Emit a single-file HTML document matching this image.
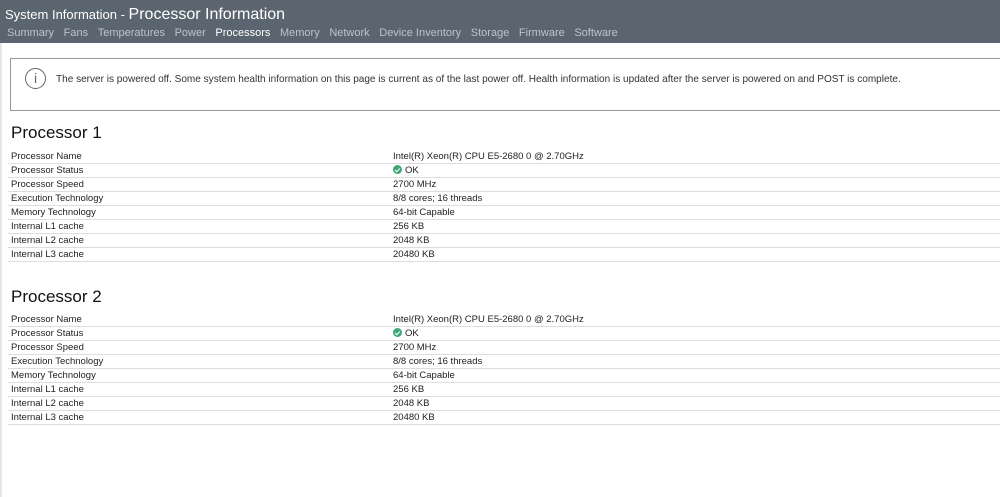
<!DOCTYPE html>
<html><head><style>
body{margin:0;width:1000px;height:497px;background:#fff;font-family:"Liberation Sans",sans-serif;overflow:hidden;position:relative}
.hdr{position:absolute;left:0;top:0;width:1000px;height:43px;background:#5b6570}
.t{position:absolute;left:5px;top:6px;color:#fff;font-size:13px;white-space:nowrap}
.t b{font-weight:normal;font-size:16px}
.tabs{position:absolute;left:7px;top:27px;font-size:11px;color:#bcc3ca;white-space:nowrap}
.tabs span{margin-right:9.6px}
.tabs .a{color:#fff}
.lb{position:absolute;left:0;top:43px;width:2px;height:454px;background:#e6e6e6}
.note{position:absolute;left:10px;top:58px;width:992px;height:53px;border:1px solid #999;box-sizing:border-box}
.ic{position:absolute;left:14px;top:9px;width:21px;height:21px;border:1.5px solid #666;border-radius:50%;box-sizing:border-box;color:#666;font-size:14px;text-align:center;line-height:19px}
.nt{position:absolute;left:45px;top:14px;font-size:10.5px;color:#333;white-space:nowrap;transform:scaleX(0.956);transform-origin:left}
h2{position:absolute;left:11px;margin:0;font-weight:normal;font-size:17px;color:#111}
table{position:absolute;left:8px;width:992px;border-collapse:collapse;font-size:9.5px;color:#222}
td{height:13px;border-bottom:1px solid #ddd;padding:0 0 0 3px;vertical-align:middle}
td:first-child{width:379px}
.ok{display:inline-block;width:9px;height:9px;border-radius:50%;background:#3fa776;vertical-align:-1px;margin-right:3px;position:relative}
.ok:after{content:"";position:absolute;left:3px;top:1.5px;width:2px;height:4px;border:solid #fff;border-width:0 1.3px 1.3px 0;transform:rotate(45deg)}
</style></head><body>
<div class="hdr"><div class="t">System Information - <b>Processor Information</b></div>
<div class="tabs"><span>Summary</span><span>Fans</span><span>Temperatures</span><span>Power</span><span class="a">Processors</span><span>Memory</span><span>Network</span><span>Device Inventory</span><span>Storage</span><span>Firmware</span><span>Software</span></div></div>
<div class="lb"></div>
<div class="note"><div class="ic">i</div><div class="nt">The server is powered off. Some system health information on this page is current as of the last power off. Health information is updated after the server is powered on and POST is complete.</div></div>
<h2 style="top:123px">Processor 1</h2>
<table style="top:150px">
<tr><td>Processor Name</td><td>Intel(R) Xeon(R) CPU E5-2680 0 @ 2.70GHz</td></tr>
<tr><td>Processor Status</td><td><span class="ok"></span>OK</td></tr>
<tr><td>Processor Speed</td><td>2700 MHz</td></tr>
<tr><td>Execution Technology</td><td>8/8 cores; 16 threads</td></tr>
<tr><td>Memory Technology</td><td>64-bit Capable</td></tr>
<tr><td>Internal L1 cache</td><td>256 KB</td></tr>
<tr><td>Internal L2 cache</td><td>2048 KB</td></tr>
<tr><td>Internal L3 cache</td><td>20480 KB</td></tr>
</table>
<h2 style="top:287px">Processor 2</h2>
<table style="top:313px">
<tr><td>Processor Name</td><td>Intel(R) Xeon(R) CPU E5-2680 0 @ 2.70GHz</td></tr>
<tr><td>Processor Status</td><td><span class="ok"></span>OK</td></tr>
<tr><td>Processor Speed</td><td>2700 MHz</td></tr>
<tr><td>Execution Technology</td><td>8/8 cores; 16 threads</td></tr>
<tr><td>Memory Technology</td><td>64-bit Capable</td></tr>
<tr><td>Internal L1 cache</td><td>256 KB</td></tr>
<tr><td>Internal L2 cache</td><td>2048 KB</td></tr>
<tr><td>Internal L3 cache</td><td>20480 KB</td></tr>
</table>
</body></html>
